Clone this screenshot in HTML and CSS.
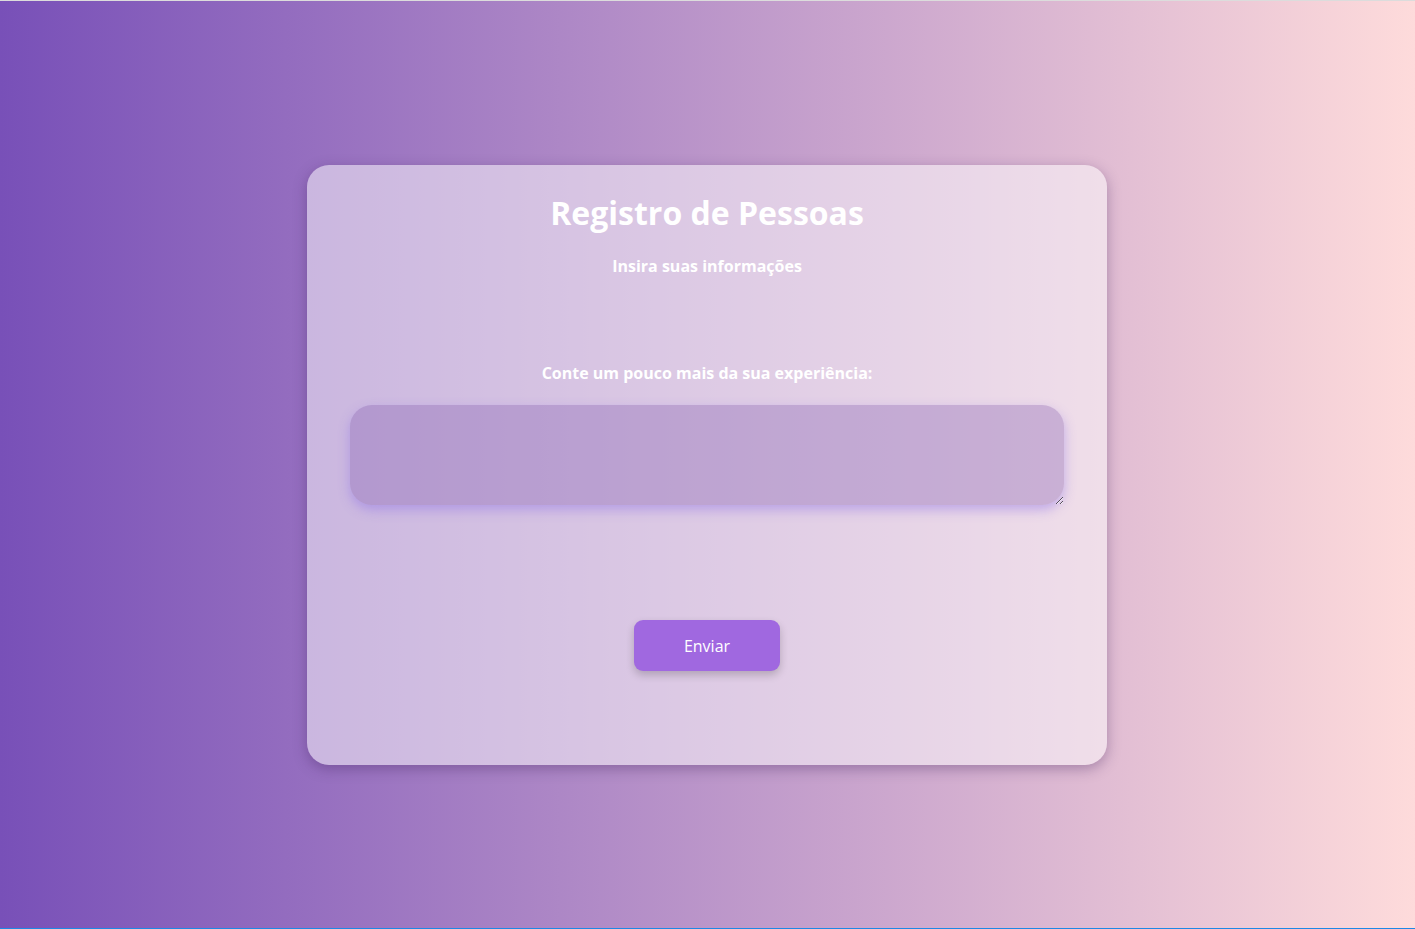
FILE: index.html
```html
<!DOCTYPE html>
<html lang="pt-BR">
<head>
<meta charset="UTF-8">
<title>Registro de Pessoas</title>
<link rel="stylesheet" href="styles.css">
</head>
<body>
<div class="frame">
  <main class="page">
    <form class="card">
      <h1 class="title">Registro de Pessoas</h1>
      <p class="subtitle">Insira suas informações</p>
      <label class="label" for="exp">Conte um pouco mais da sua experiência:</label>
      <textarea id="exp" class="textarea"></textarea>
      <button type="button" class="button">Enviar</button>
    </form>
  </main>
</div>
</body>
</html>
```

FILE: styles.css
```css
* { box-sizing: border-box; }
html, body { margin: 0; padding: 0; height: 100%; }
body {
  font-family: "Open Sans", "Noto Sans", sans-serif;
}
.frame {
  height: 929px;
  border-top: 1px solid #dcdcdc;
  border-bottom: 1px solid #1e88e5;
  background: linear-gradient(to right, #7850b8, #fedbdb);
}
.page {
  height: 100%;
  display: flex;
  align-items: center;
  justify-content: center;
}
.card {
  width: 800px;
  height: 600px;
  margin-right: 1px;
  border-radius: 22px;
  background: rgba(255, 255, 255, 0.5);
  box-shadow: 0 4px 14px rgba(60, 30, 90, 0.35);
  padding: 26px 43px 0;
  display: flex;
  flex-direction: column;
  align-items: center;
  color: #fff;
}
.title {
  margin: 0;
  font-size: 32px;
  font-weight: 700;
  line-height: 44px;
}
.subtitle {
  margin: 20px 0 0;
  font-size: 16px;
  font-weight: 700;
  line-height: 22px;
}
.label {
  margin-top: 85px;
  font-size: 16px;
  font-weight: 700;
  line-height: 22px;
}
.textarea {
  margin-top: 21px;
  width: 714px;
  height: 100px;
  border: none;
  border-radius: 22px;
  background: rgba(125, 85, 170, 0.32);
  box-shadow: 0 5px 12px rgba(140, 110, 230, 0.45);
  outline: none;
  font-family: inherit;
  font-size: 16px;
  color: #fff;
  padding: 10px 16px;
}
.button {
  margin-top: 115px;
  width: 146px;
  height: 51px;
  border: none;
  border-radius: 9px;
  background: #a068e0;
  color: #fff;
  font-family: inherit;
  font-size: 16px;
  line-height: 51px;
  padding: 1px 0 0;
  box-shadow: 0 4px 8px rgba(0, 0, 0, 0.2);
  cursor: pointer;
}
```
